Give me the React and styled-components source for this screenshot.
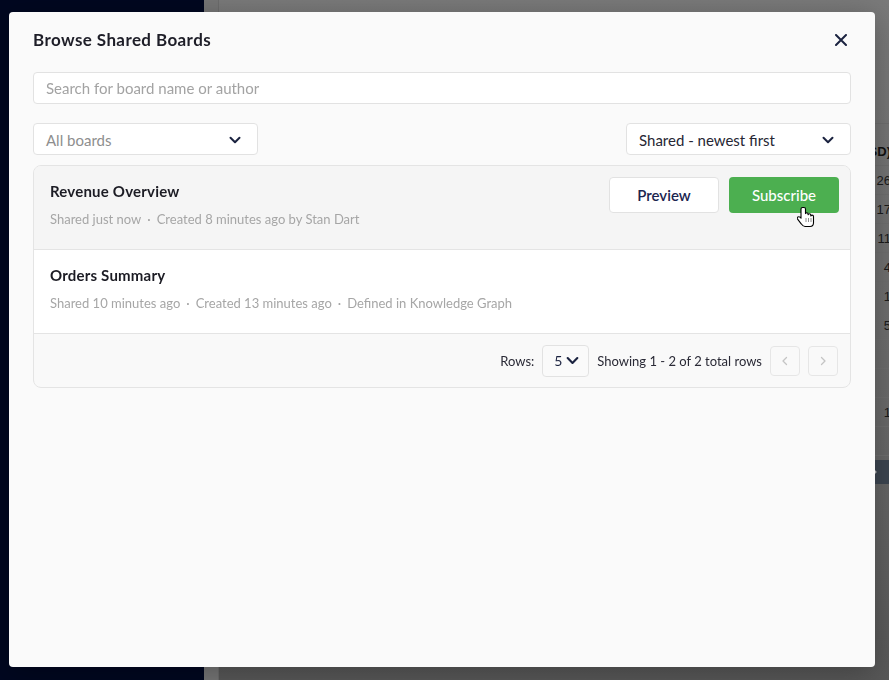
import React from 'react';
import styled, { createGlobalStyle } from 'styled-components';

const GlobalStyle = createGlobalStyle`
  html, body {
    margin: 0;
    padding: 0;
    height: 100%;
    overflow: hidden;
  }
  body {
    font-family: Lato, "Noto Sans", sans-serif;
    background: #7a7a7a;
  }
`;

const boards = [
  {
    id: 1,
    name: 'Revenue Overview',
    meta: ['Shared just now', 'Created 8 minutes ago by Stan Dart'],
    hovered: true,
  },
  {
    id: 2,
    name: 'Orders Summary',
    meta: ['Shared 10 minutes ago', 'Created 13 minutes ago', 'Defined in Knowledge Graph'],
    hovered: false,
  },
];

const backdropCells = ['26', '17', '11', '4', '1', '5', '', '', '1', ''];

const Chevron = ({ size = 14, color = '#1b2340' }) => (
  <svg width={size} height={size} viewBox="0 0 14 14" fill="none">
    <path d="M2.5 4.75 L7 9.25 L11.5 4.75" stroke={color} strokeWidth="2" strokeLinecap="round" strokeLinejoin="round" />
  </svg>
);

const SmallArrow = ({ dir }) => (
  <svg width="10" height="10" viewBox="0 0 10 10" fill="none">
    <path
      d={dir === 'left' ? 'M6.5 1.5 L3 5 L6.5 8.5' : 'M3.5 1.5 L7 5 L3.5 8.5'}
      stroke="#c4c4c4"
      strokeWidth="1.3"
      strokeLinecap="round"
      strokeLinejoin="round"
    />
  </svg>
);

const HandCursor = () => (
  <svg width="18" height="22" viewBox="0 0 18 22">
    <path
      d="M5.5 1.5c-.8 0-1.5.7-1.5 1.5v9.2l-1-1c-.7-.7-1.8-.7-2.4 0-.5.6-.5 1.4 0 2l3.6 4.6c.9 1.2 1.9 2.7 3.8 2.7h5c2.1 0 3.5-1.6 3.5-3.7V10.5c0-.8-.7-1.4-1.4-1.4-.6 0-1.1.4-1.3.9V9.2c0-.8-.6-1.4-1.4-1.4-.6 0-1.1.4-1.3 1V8.2c0-.8-.6-1.4-1.4-1.4-.6 0-1 .3-1.2.8V3c0-.8-.7-1.5-1.5-1.5z"
      fill="#fff"
      stroke="#000"
      strokeWidth="1.1"
      strokeLinejoin="round"
    />
    <path d="M9 12.5v4M11.5 12.5v4M14 12.5v4" stroke="#000" strokeWidth="0.9" strokeDasharray="1 1" />
  </svg>
);

const CloseIcon = () => (
  <svg width="12" height="12" viewBox="0 0 12 12" fill="none">
    <path d="M1 1 L11 11 M11 1 L1 11" stroke="#1b2340" strokeWidth="2" strokeLinecap="round" />
  </svg>
);

const App = () => (
  <>
    <GlobalStyle />
    <Page>
      <Sidebar />
      <Main>
        <BackdropTable>
          <BackdropHead>(USD)</BackdropHead>
          {backdropCells.map((value, i) => (
            <BackdropCell key={i}>{value}</BackdropCell>
          ))}
          <BackdropPager>
            <SmallArrow dir="right" />
          </BackdropPager>
        </BackdropTable>
      </Main>
    </Page>

    <Modal>
      <Header>
        <Title>Browse Shared Boards</Title>
        <CloseButton>
          <CloseIcon />
        </CloseButton>
      </Header>

      <SearchInput placeholder="Search for board name or author" />

      <FilterRow>
        <Select placeholder>
          <span>All boards</span>
          <Chevron />
        </Select>
        <Select>
          <span>Shared - newest first</span>
          <Chevron />
        </Select>
      </FilterRow>

      <TableCard>
        {boards.map((board) => (
          <BoardRow key={board.id} hovered={board.hovered}>
            <BoardInfo>
              <BoardName>{board.name}</BoardName>
              <BoardMeta>
                {board.meta.map((part, i) => (
                  <React.Fragment key={i}>
                    {i > 0 && <Dot>·</Dot>}
                    {part}
                  </React.Fragment>
                ))}
              </BoardMeta>
            </BoardInfo>
            {board.hovered && (
              <Actions>
                <PreviewButton>Preview</PreviewButton>
                <SubscribeButton>
                  Subscribe
                  <CursorSpot>
                    <HandCursor />
                  </CursorSpot>
                </SubscribeButton>
              </Actions>
            )}
          </BoardRow>
        ))}

        <Footer>
          <FooterLabel>Rows:</FooterLabel>
          <RowsSelect>
            <span>5</span>
            <Chevron size={15} />
          </RowsSelect>
          <FooterLabel>Showing 1 - 2 of 2 total rows</FooterLabel>
          <PagerButtons>
            <PagerButton>
              <SmallArrow dir="left" />
            </PagerButton>
            <PagerButton>
              <SmallArrow dir="right" />
            </PagerButton>
          </PagerButtons>
        </Footer>
      </TableCard>
    </Modal>
  </>
);

const Page = styled.div`
  display: flex;
  height: 100vh;
  width: 100vw;
`;

const Sidebar = styled.div`
  width: 204px;
  flex-shrink: 0;
  background: #000720;
`;

const Main = styled.div`
  flex: 1;
  display: flex;
  justify-content: flex-end;
  overflow: hidden;
  background: linear-gradient(180deg, #7a7a7a 0%, #6a6a6a 60%, #585858 100%);
  border-left: 14px solid #767676;
  box-shadow: inset 1px 0 0 #6c6c6c;
  padding-top: 123px;
`;

const BackdropTable = styled.div`
  width: 60px;
  margin-right: -2px;
  display: flex;
  flex-direction: column;
  border-top: 1px solid #6e6e6e;
  color: #111;
  font-family: "Liberation Sans", Arial, sans-serif;
  font-size: 13px;
`;

const BackdropHead = styled.div`
  height: 42px;
  display: flex;
  align-items: flex-end;
  justify-content: flex-end;
  padding-bottom: 6px;
  box-sizing: border-box;
  font-weight: bold;
  border-bottom: 1px solid #6e6e6e;
`;

const BackdropCell = styled.div`
  height: 28px;
  display: flex;
  align-items: center;
  justify-content: flex-end;
  border-bottom: 1px solid #6e6e6e;
  color: #1a1a1a;
`;

const BackdropPager = styled.div`
  margin-top: 4px;
  height: 24px;
  background: #3c4550;
  display: flex;
  align-items: center;
  padding-left: 38px;
`;

const Modal = styled.div`
  position: fixed;
  top: 12px;
  left: 9px;
  width: 866px;
  height: 655px;
  box-sizing: border-box;
  padding: 0 24px;
  background: #fafafa;
  border-radius: 4px;
  box-shadow: 0 6px 30px rgba(0, 0, 0, 0.28);
  display: flex;
  flex-direction: column;
`;

const Header = styled.div`
  height: 55px;
  display: flex;
  align-items: center;
  justify-content: space-between;
`;

const Title = styled.h2`
  margin: 0;
  font-size: 17px;
  font-weight: 700;
  letter-spacing: 0.4px;
  color: #1e1e28;
`;

const CloseButton = styled.button`
  border: none;
  background: none;
  padding: 0;
  margin-right: 4px;
  display: flex;
  cursor: pointer;
`;

const SearchInput = styled.input`
  margin-top: 5px;
  height: 32px;
  box-sizing: border-box;
  border: 1px solid #e2e2e2;
  border-radius: 4px;
  background: #fff;
  padding: 0 12px;
  font-family: inherit;
  font-size: 15px;
  color: #222;
  outline: none;

  &::placeholder {
    color: #a3a3a3;
  }
`;

const FilterRow = styled.div`
  margin-top: 19px;
  display: flex;
  justify-content: space-between;
`;

const Select = styled.div`
  width: 225px;
  height: 32px;
  box-sizing: border-box;
  border: 1px solid #e2e2e2;
  border-radius: 4px;
  background: #fff;
  padding: 1px 15px 0 12px;
  display: flex;
  align-items: center;
  justify-content: space-between;
  font-size: 15px;
  color: ${(p) => (p.placeholder ? '#8e8e8e' : '#262633')};
`;

const TableCard = styled.div`
  margin-top: 10px;
  border: 1px solid #e4e4e4;
  border-radius: 8px;
  overflow: hidden;
  background: #f9f9f9;
`;

const BoardRow = styled.div`
  height: 84px;
  box-sizing: border-box;
  padding: 11px 11px 0 16px;
  display: flex;
  justify-content: space-between;
  align-items: flex-start;
  background: ${(p) => (p.hovered ? '#f5f5f5' : '#fff')};
  border-bottom: 1px solid #e4e4e4;
`;

const BoardInfo = styled.div`
  padding-top: 4px;
  display: flex;
  flex-direction: column;
`;

const BoardName = styled.div`
  font-size: 15px;
  font-weight: 700;
  line-height: 20px;
  letter-spacing: 0.2px;
  color: #1c1c24;
`;

const BoardMeta = styled.div`
  margin-top: 8px;
  font-size: 13px;
  line-height: 20px;
  color: #a6a6a6;
`;

const Dot = styled.span`
  margin: 0 6px;
`;

const Actions = styled.div`
  display: flex;
  gap: 10px;
`;

const ActionButton = styled.button`
  position: relative;
  width: 110px;
  height: 36px;
  border-radius: 4px;
  font-family: inherit;
  font-size: 15px;
  cursor: pointer;
`;

const PreviewButton = styled(ActionButton)`
  background: #fff;
  border: 1px solid #e2e2e2;
  color: #1b2550;
  font-weight: 600;
`;

const SubscribeButton = styled(ActionButton)`
  background: #4caf50;
  border: none;
  color: #fff;
  font-weight: 500;
`;

const CursorSpot = styled.span`
  position: absolute;
  left: 68px;
  top: 29px;
  display: flex;
  pointer-events: none;
`;

const Footer = styled.div`
  height: 53px;
  display: flex;
  align-items: center;
  justify-content: flex-end;
  padding-right: 12px;
  gap: 8px;
`;

const FooterLabel = styled.span`
  font-size: 13px;
  color: #2a2a36;
`;

const RowsSelect = styled.div`
  width: 47px;
  height: 32px;
  box-sizing: border-box;
  border: 1px solid #e2e2e2;
  border-radius: 4px;
  background: #fafafa;
  display: flex;
  align-items: center;
  justify-content: space-between;
  padding: 0 8px 0 11px;
  font-size: 14px;
  color: #1b2340;
`;

const PagerButtons = styled.div`
  display: flex;
  gap: 8px;
`;

const PagerButton = styled.div`
  width: 30px;
  height: 30px;
  box-sizing: border-box;
  border: 1px solid #e6e6e6;
  border-radius: 4px;
  display: flex;
  align-items: center;
  justify-content: center;
`;

export default App;
